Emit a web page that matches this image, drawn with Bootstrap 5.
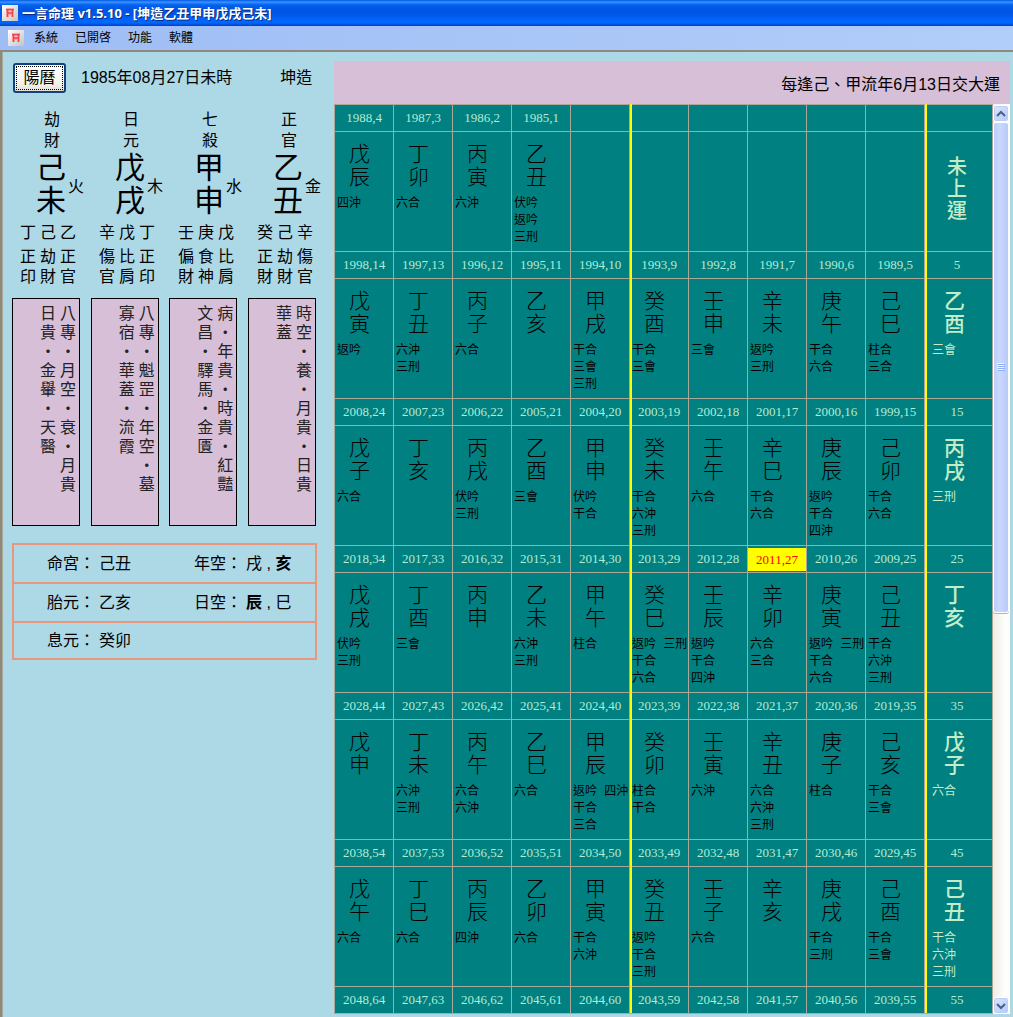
<!DOCTYPE html>
<html lang="zh-Hant">
<head>
<meta charset="utf-8">
<meta name="viewport" content="width=device-width, initial-scale=1">
<title>一言命理 v1.5.10</title>
<link href="https://cdn.jsdelivr.net/npm/bootstrap@5.3.0/dist/css/bootstrap.min.css" rel="stylesheet">
<style>
body{background:#add8e6;color:#000;font:16px/20px "Liberation Sans","Noto Sans CJK TC",sans-serif;min-height:100vh}
.titlebar{height:26px;padding-left:2px;gap:4px;color:#fff;font:bold 13px/26px "Open Sans","Noto Sans CJK TC",sans-serif;text-shadow:1px 1px #0a2a80;background:linear-gradient(#0058e6 0,#3a93ff 2px,#0062ef 5px,#0054e0 10px,#0058ea 15px,#0068ff 21px,#0066fb 23px,#003ec4 26px)}
.menubar{height:24px;padding-left:8px;background:linear-gradient(90deg,#9ebdf5,#b1cdf9)}
.menubar a{font-size:12px;line-height:24px;color:#000;text-decoration:none;margin-right:17px;white-space:nowrap}
.menubar svg{margin-right:10px}
.client{border-top:2px solid #8d897c;border-left:2px solid #8d897c;box-shadow:inset 1px 0 #aca899}
.side{flex:0 0 332px;padding-left:10px}
.side-head{padding:11px 0 0 1px}
.btn-cal{width:53px;height:30px;padding:0;font-size:16px;line-height:22px;background:linear-gradient(#fff,#f3f3ee 70%,#e2dfd5);border:2px solid #14407c;border-radius:3px;outline:1px dotted #000;outline-offset:-4px;color:#000}
.birth{margin-left:15px}
.sexe{margin-left:48px}
.pillars{margin-top:16px;padding-left:6px}
.pillar{flex:0 0 79px}
.god{width:16px;margin-left:26px;line-height:21px}
.main-gz{width:30px;margin-left:18px;font:30px/33px "Liberation Sans","Noto Sans CJK TC",sans-serif}
.elem{margin-left:2px;margin-top:5px}
.hid{gap:4px;padding-left:2px;padding-top:6px}
.hid div{width:16px;line-height:20px}
.hid b{display:block;font-weight:400;margin-bottom:4px}
.stars{width:304px;margin-top:11px}
.star-box{width:68px;height:228px;border:1px solid #000;background:#d8bfd8;padding:5px 3px 0 0;gap:4px}
.star-box div{width:16px;line-height:19px;line-break:anywhere;word-break:break-all;color:#222}
.info{width:305px;margin-top:17px;border:2px solid #e9967a}
.info-row{height:39px;padding-left:33px;border-bottom:2px solid #e9967a;gap:4px}
.info-row:last-child{height:35px;border-bottom:0}
.info-row span:nth-child(2){width:91px}
.luck{flex:1 1 0;min-width:0;margin:9px 3px 3px 0}
.luck-head{height:43px;padding:5px 10px 0 0;background:#d8bfd8}
.years{table-layout:fixed;border-collapse:separate;border-spacing:0;width:100%;background:#008080;border-right:1px solid #aca899;border-bottom:1px solid #aca899;flex:1 1 0}
.years td,.years th{position:relative;padding:0;border:0 solid #aca899;border-width:1px 0 0 1px;vertical-align:top}
.years th{height:27px;font:13px/26px "Liberation Serif",serif;color:#b4ebd2;text-align:center;vertical-align:middle}
.years td{height:120px;font:12px/17px "Liberation Mono","Noto Sans CJK TC",monospace;white-space:nowrap}
.years .bar::before{content:"";position:absolute;top:-1px;bottom:0;left:0;width:2px;background:#ff0}
.years col.last{width:68px}
.years th:last-child{padding-right:3px}
.years td:last-child{color:#c3edc8}
.now span{display:block;line-height:23px;background:#ff0;color:#f00;margin-top:1px}
.gz{width:21px;margin:10px 0 8px 14px;font:300 21px/23px "Liberation Sans","Noto Sans CJK TC",sans-serif}
td:last-child .gz{margin-left:19px;font-weight:500}
.notes{padding-left:2px}
td:last-child .notes{padding-left:7px}
.before-luck{width:20px;margin:24px 0 0 22px;font:500 20px/22px "Liberation Sans","Noto Sans CJK TC",sans-serif}
.sbar{flex:0 0 17px;background:linear-gradient(90deg,#eeede5,#fefefb 70%);padding:1px 1px 0 0}
.sbtn{height:17px;width:16px;padding:0;border:1px solid #fff;border-radius:3px;background:linear-gradient(135deg,#dbe6ff,#b3c9fa);box-shadow:inset 0 0 0 1px #bccdf8;display:flex;align-items:center;justify-content:center}
.thumb{height:491px;width:16px;border:1px solid #fff;border-radius:3px;background:linear-gradient(90deg,#bccffb,#c9d8fe 40%,#b8cbf7);box-shadow:0 1px #9db4e4}
</style>
</head>
<body class="d-flex flex-column">
<svg width="0" height="0" class="position-absolute"><defs>
<linearGradient id="ig" x2="1" y2="1"><stop stop-color="#fff"/><stop offset="1" stop-color="#c6c2c0"/></linearGradient>
<g id="appicon"><rect width="16" height="16" fill="url(#ig)"/><path d="M4 5h8M5.500 5v7M10.500 5v7M5 8.500h6" stroke="#faa" stroke-width="3" fill="none"/><path d="M4 4.500h8M5.500 5v7M10.500 5v7M6 8h4" stroke="#f0454d" stroke-width="1.500" fill="none"/></g></defs></svg>
<header class="titlebar d-flex align-items-center"><svg width="16" height="16"><use href="#appicon"/></svg><span>一言命理 v1.5.10 - [坤造乙丑甲申戊戌己未]</span></header>
<nav class="menubar d-flex align-items-center"><svg width="16" height="16"><use href="#appicon"/></svg><a href="#">系統</a><a href="#">已開啓</a><a href="#">功能</a><a href="#">軟體</a></nav>
<main class="client d-flex flex-grow-1">
<section class="side">
<div class="side-head d-flex align-items-center"><button class="btn btn-cal" type="button">陽曆</button><span class="birth">1985年08月27日未時</span><span class="sexe">坤造</span></div>
<div class="pillars d-flex" id="pillars"></div>
<div class="stars d-flex justify-content-between" id="stars"></div>
<div class="info">
<div class="info-row d-flex align-items-center"><span>命宮：</span><span>己丑</span><span>年空：</span><span>戌 , <b>亥</b></span></div>
<div class="info-row d-flex align-items-center"><span>胎元：</span><span>乙亥</span><span>日空：</span><span><b>辰</b> , 巳</span></div>
<div class="info-row d-flex align-items-center"><span>息元：</span><span>癸卯</span></div>
</div>
</section>
<section class="luck">
<div class="luck-head d-flex align-items-center justify-content-end">每逢己、甲流年6月13日交大運</div>
<div class="d-flex">
<table class="years"><colgroup><col span="10"><col class="last"></colgroup><tbody id="years"></tbody></table>
<div class="sbar d-flex flex-column">
<button class="sbtn" type="button" aria-label="向上"><svg width="10" height="8"><path d="M1 6l4-4 4 4" fill="none" stroke="#4d6185" stroke-width="2"/></svg></button>
<div class="thumb d-flex align-items-center justify-content-center"><svg width="8" height="9"><path d="M0 .5h7M0 2.500h7M0 4.500h7M0 6.500h7" stroke="#eef4fe"/><path d="M1 1.500h7M1 3.500h7M1 5.500h7M1 7.500h7" stroke="#8cb0f8"/></svg></div>
<button class="sbtn mt-auto" type="button" aria-label="向下"><svg width="10" height="8"><path d="M1 2l4 4 4-4" fill="none" stroke="#4d6185" stroke-width="2"/></svg></button>
</div>
</div>
</section>
</main>
<script src="https://cdn.jsdelivr.net/npm/bootstrap@5.3.0/dist/js/bootstrap.bundle.min.js"></script>
<script>
const pillars = [
  ['劫財','己未','火',['丁正印','己劫財','乙正官']],
  ['日元','戊戌','木',['辛傷官','戊比肩','丁正印']],
  ['七殺','甲申','水',['壬偏財','庚食神','戊比肩']],
  ['正官','乙丑','金',['癸正財','己劫財','辛傷官']]
];
document.getElementById('pillars').innerHTML = pillars.map(([god, gz, el, hid]) =>
  `<div class="pillar"><div class="god">${god}</div><div class="d-flex align-items-center"><div class="main-gz">${gz}</div><span class="elem">${el}</span></div><div class="hid d-flex">${hid.map(h => `<div><b>${h[0]}</b>${h.slice(1)}</div>`).join('')}</div></div>`).join('');

const stars = [
  ['日貴・金轝・天醫','八專・月空・衰・月貴'],
  ['寡宿・華蓋・流霞','八專・魁罡・年空・墓'],
  ['文昌・驛馬・金匱','病・年貴・時貴・紅豔'],
  ['華蓋','時空・養・月貴・日貴']
];
document.getElementById('stars').innerHTML = stars.map(s =>
  `<div class="star-box d-flex justify-content-end">${s.map(t => `<div>${t}</div>`).join('')}</div>`).join('');

const stems = '戊丁丙乙甲癸壬辛庚己';
const decades = [
  {year:1988, age:4, branches:'辰卯寅丑', notes:['四沖','六合','六沖','伏吟/返吟/三刑']},
  {year:1998, age:14, branches:'寅丑子亥戌酉申未午巳', luck:'乙酉', notes:['返吟','六沖/三刑','六合','','干合/三會/三刑','干合/三會','三會','返吟/三刑','干合/六合','柱合/三合','三會']},
  {year:2008, age:24, branches:'子亥戌酉申未午巳辰卯', luck:'丙戌', notes:['六合','','伏吟/三刑','三會','伏吟/干合','干合/六沖/三刑','六合','干合/六合','返吟/干合/四沖','干合/六合','三刑']},
  {year:2018, age:34, branches:'戌酉申未午巳辰卯寅丑', luck:'丁亥', notes:['伏吟/三刑','三會','','六沖/三刑','柱合','返吟 三刑/干合/六合','返吟/干合/四沖','六合/三合','返吟 三刑/干合/六合','干合/六沖/三刑','']},
  {year:2028, age:44, branches:'申未午巳辰卯寅丑子亥', luck:'戊子', notes:['','六沖/三刑','六合/六沖','六合','返吟 四沖/干合/三合','柱合/干合','六沖','六合/六沖/三刑','柱合','干合/三會','六合']},
  {year:2038, age:54, branches:'午巳辰卯寅丑子亥戌酉', luck:'己丑', notes:['六合','六合','四沖','六合','干合/六沖','返吟/干合/三刑','六合','','干合/三刑','干合/三會','干合/六沖/三刑']},
  {year:2048, age:64}
];
const bar = i => i === 5 || i === 10 ? ' bar' : '';
const noteHtml = n => `<div class="notes">${(n || '').replace(/\//g, '<br>')}</div>`;
let rows = '';
for (const d of decades) {
  rows += '<tr>';
  for (let i = 0; i < 10; i++) {
    const shown = d.age - i > 0, now = d.year - i === 2011;
    rows += `<th class="${bar(i)}${now ? ' now' : ''}"><span>${shown ? `${d.year - i},${d.age - i}` : ''}</span></th>`;
  }
  rows += `<th class="bar">${d.age > 4 ? d.age - 9 : ''}</th></tr>`;
  if (!d.branches) continue;
  rows += '<tr>';
  for (let i = 0; i < 10; i++) {
    rows += `<td class="${bar(i)}">${d.branches[i] ? `<div class="gz">${stems[i]}<br>${d.branches[i]}</div>${noteHtml(d.notes[i])}` : ''}</td>`;
  }
  rows += d.luck
    ? `<td class="bar"><div class="gz">${d.luck[0]}<br>${d.luck[1]}</div>${noteHtml(d.notes[10])}</td></tr>`
    : '<td class="bar"><div class="before-luck">未<br>上<br>運</div></td></tr>';
}
document.getElementById('years').innerHTML = rows;
</script>
</body>
</html>
